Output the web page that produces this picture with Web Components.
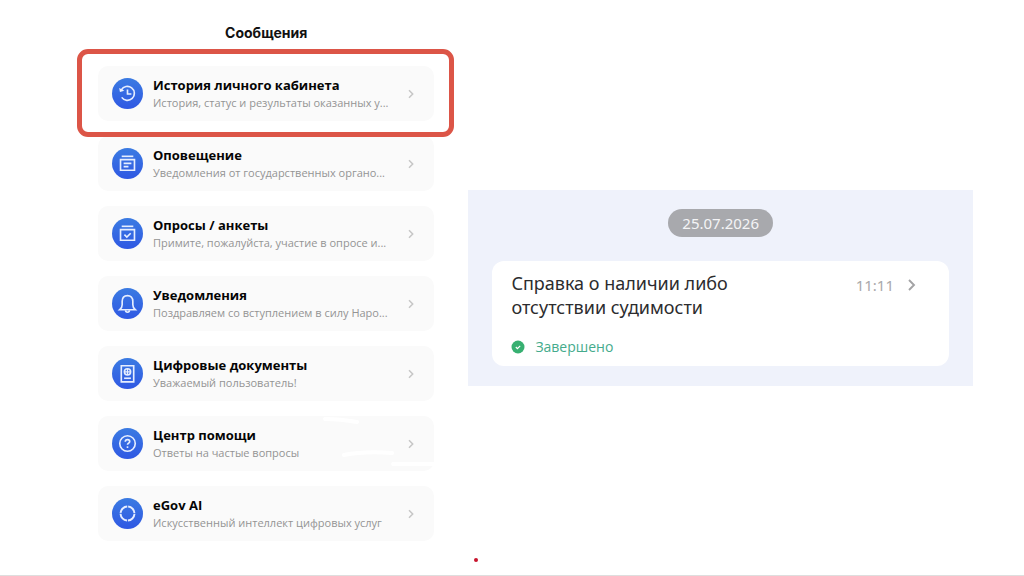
<!DOCTYPE html>
<html lang="ru">
<head>
<meta charset="utf-8">
<meta name="viewport" content="width=device-width, initial-scale=1">
<title>Сообщения</title>
<style>
  html, body { margin: 0; background: #fff; }
  body { font-family: "Noto Sans", "Open Sans", sans-serif; color: #0c0c0e; }
</style>
</head>
<body>
<messages-page>
  <message-list slot="list" heading="Сообщения">
    <message-item icon="history" heading="История личного кабинета" highlighted>История, статус и результаты оказанных у...</message-item>
    <message-item icon="notice" heading="Оповещение">Уведомления от государственных органо...</message-item>
    <message-item icon="poll" heading="Опросы / анкеты">Примите, пожалуйста, участие в опросе и...</message-item>
    <message-item icon="bell" heading="Уведомления">Поздравляем со вступлением в силу Наро...</message-item>
    <message-item icon="passport" heading="Цифровые документы">Уважаемый пользователь!</message-item>
    <message-item icon="help" heading="Центр помощи" smudged>Ответы на частые вопросы</message-item>
    <message-item icon="ai" heading="eGov AI">Искусственный интеллект цифровых услуг</message-item>
  </message-list>
  <history-panel slot="detail" date="25.07.2026">
    <history-card time="11:11" status="Завершено">Справка о наличии либо отсутствии судимости</history-card>
  </history-panel>
</messages-page>

<script>
const ICONS = {
  history: `<path d="M9.6 12.4A7.2 7.2 0 1 1 10 20"/><path d="M7.400 10.200l.8 4.200 4.600-1.200z" fill="#edf3ff" stroke="none"/><path d="M16 11.800v4.700h4"/>`,
  notice: `<path d="M10 8.600h12"/><path d="M8.800 12h14.400v11H8.800z"/><path d="M12 15.800h8M12 19.200h5"/>`,
  poll: `<path d="M10 8.600h12"/><path d="M8.800 12h14.400v11H8.800z"/><path d="M12.800 17.200l2.500 2.500 4-4"/>`,
  bell: `<path d="M8 22.400h16c-1.800-1.600-2.500-2.800-2.500-5.200v-3.400c0-3.600-2.200-6-5.500-6s-5.500 2.400-5.500 6v3.400c0 2.400-.7 3.600-2.500 5.200z"/><path d="M14 23a2 2 0 0 0 4 0"/>`,
  passport: `<path d="M9.600 8h12.800v16.600H9.600z"/><circle cx="16" cy="14.300" r="3.200"/><path d="M16 11v6.500M13 14.300h6" stroke-width="1.300"/><path d="M12.500 20.900h7"/>`,
  help: `<circle cx="16" cy="16" r="8"/><path d="M13.700 14.200c0-3 4.600-2.800 4.600-.2 0 1.600-2.300 1.500-2.300 3.300"/><path d="M16 18.900v1.700"/>`,
  ai: `<circle cx="16" cy="16" r="7.200" stroke-width="2" stroke-dasharray="10.310 1" stroke-dashoffset="-.5"/>`
};

class MessagesPage extends HTMLElement {
  connectedCallback() {
    this.attachShadow({ mode: 'open' }).innerHTML = `
      <style>
        :host { display: block; }
        main {
          box-sizing: border-box; min-height: 100vh; padding: 0 51px 0 98px;
          display: grid; grid-template-columns: minmax(0, 2fr) minmax(0, 3fr); column-gap: 34px;
          border-bottom: 1px solid #dedede; position: relative;
        }
        ::slotted([slot="detail"]) { align-self: center; }
        .dot {
          position: absolute; bottom: 13px; left: 474px;
          width: 4px; height: 4px; border-radius: 50%; background: #c8142d;
        }
      </style>
      <main>
        <slot name="list"></slot>
        <slot name="detail"></slot>
        <span class="dot"></span>
      </main>`;
  }
}

class MessageList extends HTMLElement {
  connectedCallback() {
    this.attachShadow({ mode: 'open' }).innerHTML = `
      <style>
        :host { display: block; padding: 21px 0 34px; }
        h1 {
          margin: 0 0 21px; text-align: center; color: #111;
          font: 700 14px/24px Inter, "Liberation Sans", sans-serif;
        }
        nav { display: flex; flex-direction: column; gap: 15px; }
      </style>
      <h1>${this.getAttribute('heading')}</h1>
      <nav><slot></slot></nav>`;
  }
}

class MessageItem extends HTMLElement {
  connectedCallback() {
    this.attachShadow({ mode: 'open' }).innerHTML = `
      <style>
        :host { display: block; position: relative; font-family: "Open Sans", "Noto Sans", sans-serif; }
        :host([highlighted]) { z-index: 1; }
        a {
          box-sizing: border-box; min-height: 55px; padding: 0 19px 0 14px;
          display: flex; align-items: center; gap: 10px;
          background: #fafafa; border-radius: 10px;
          color: inherit; text-decoration: none;
        }
        .icon { flex: none; width: 31px; height: 31px; }
        .text { flex: 1; min-width: 0; }
        .text > * { display: block; white-space: nowrap; }
        strong { font-size: 13px; line-height: 19px; font-weight: 700; color: #050505; }
        small { font-size: 11px; line-height: 16px; color: #949494; }
        .chevron { flex: none; width: 8px; height: 10px; }
        .frame {
          position: absolute; inset: -17px -20px -16px -21px;
          border: 5px solid #dc5547; border-radius: 11px; pointer-events: none;
        }
        .smudge { position: absolute; top: 0; right: 0; width: 115px; height: 55px; }
      </style>
      <a href="#${this.getAttribute('icon')}">
        <svg class="icon" viewBox="0 0 32 32" aria-hidden="true">
          <defs><linearGradient id="g" x1="0" y1="0" x2="0" y2="1">
            <stop offset="0" stop-color="#3b7be2"/><stop offset="1" stop-color="#2f58e3"/>
          </linearGradient></defs>
          <circle cx="16" cy="16" r="16" fill="url(#g)"/>
          <g fill="none" stroke="#e6eeff" stroke-width="1.700">${ICONS[this.getAttribute('icon')]}</g>
        </svg>
        <span class="text">
          <strong>${this.getAttribute('heading')}</strong>
          <small><slot></slot></small>
        </span>
        <svg class="chevron" viewBox="0 0 8 10" aria-hidden="true"><path d="M2 1.300l3.700 3.700L2 8.700" fill="none" stroke="#c6c6c6" stroke-width="1.500"/></svg>
      </a>
      ${this.hasAttribute('highlighted') ? '<span class="frame"></span>' : ''}
      ${this.hasAttribute('smudged') ? `
        <svg class="smudge" viewBox="0 0 115 55" aria-hidden="true" fill="none" stroke="#fff" stroke-width="4" stroke-linecap="round">
          <path d="M6 3q15 0 32 3M25 39q20-4 48-2M74 48h40"/>
        </svg>` : ''}`;
  }
}

class HistoryPanel extends HTMLElement {
  connectedCallback() {
    this.attachShadow({ mode: 'open' }).innerHTML = `
      <style>
        :host { display: block; background: #eff2fb; }
        section {
          padding: 19px 24px 20px; display: flex; flex-direction: column; gap: 24px;
        }
        time {
          align-self: center; padding: 0 14px; border-radius: 14px;
          background: #a8a9ad; color: #f4f4f6; font-size: 15px; line-height: 28px;
        }
      </style>
      <section>
        <time datetime="2026-07-25">${this.getAttribute('date')}</time>
        <slot></slot>
      </section>`;
  }
}

class HistoryCard extends HTMLElement {
  connectedCallback() {
    this.attachShadow({ mode: 'open' }).innerHTML = `
      <style>
        :host { display: block; }
        a {
          display: block; padding: 10px 32px 8px 19px; background: #fff;
          border-radius: 12px; color: inherit; text-decoration: none;
        }
        .top { display: flex; align-items: flex-start; }
        h2 { margin: 0; width: 60%; font-size: 18px; line-height: 24px; font-weight: 400; color: #2c2c2e; }
        .when { margin-left: auto; display: flex; align-items: center; gap: 13px; }
        time { font-size: 15px; line-height: 28px; color: #a9a9ab; }
        .chevron { width: 10px; height: 14px; }
        .status { margin: 17px 0 0; display: flex; align-items: center; gap: 10px; font-family: "Open Sans", "Noto Sans", sans-serif; font-size: 14px; line-height: 22px; color: #45ab8c; }
        .status svg { width: 14px; height: 14px; }
      </style>
      <a href="#certificate">
        <div class="top">
          <h2><slot></slot></h2>
          <span class="when">
            <time>${this.getAttribute('time')}</time>
            <svg class="chevron" viewBox="0 0 10 14" aria-hidden="true"><path d="M2 2l5 5-5 5" fill="none" stroke="#a3a3a5" stroke-width="1.900"/></svg>
          </span>
        </div>
        <p class="status">
          <svg viewBox="0 0 14 14" aria-hidden="true"><circle cx="7" cy="7" r="6.500" fill="#37b071"/><path d="M4.800 7l1.600 1.600 2.800-2.800" fill="none" stroke="#fff" stroke-width="1.200"/></svg>
          ${this.getAttribute('status')}
        </p>
      </a>`;
  }
}

customElements.define('history-card', HistoryCard);
customElements.define('history-panel', HistoryPanel);
customElements.define('message-item', MessageItem);
customElements.define('message-list', MessageList);
customElements.define('messages-page', MessagesPage);
</script>
</body>
</html>
